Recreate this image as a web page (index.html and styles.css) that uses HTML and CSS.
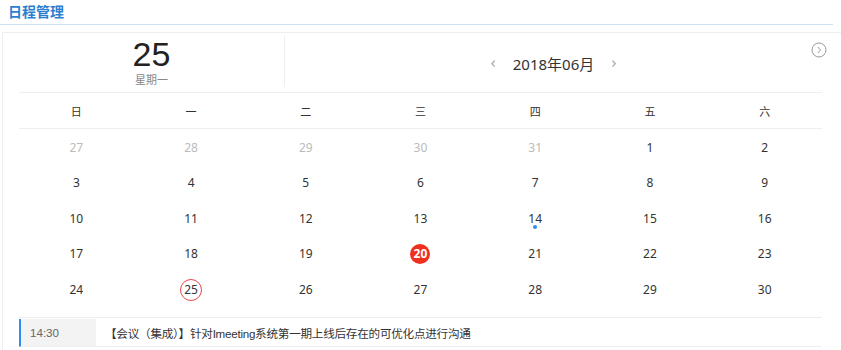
FILE: index.html
```html
<!DOCTYPE html>
<html lang="zh">

<head>
    <meta charset="UTF-8" />
    <link rel="stylesheet" href="styles.css">
</head>

<body>
    <div class="title-bar">
        <span class="title">日程管理</span>
    </div>

    <div class="panel">
        <div class="panel-head">
            <div class="today">
                <div class="today-num">25</div>
                <div class="today-week">星期一</div>
            </div>
            <div class="month-nav">
                <span class="arrow">&lsaquo;</span>
                <span class="month">2018年06月</span>
                <span class="arrow">&rsaquo;</span>
            </div>
            <svg class="more" width="16" height="16" viewBox="0 0 16 16">
                <circle cx="8" cy="8" r="7" fill="none" stroke="#999" stroke-width="1" />
                <path d="M6.8 5 L9.6 8 L6.8 11" fill="none" stroke="#999" stroke-width="1" />
            </svg>
        </div>

        <div class="calendar">
            <div class="week-row">
                <span>日</span><span>一</span><span>二</span><span>三</span><span>四</span><span>五</span><span>六</span>
            </div>
            <div class="days" id="days"></div>
        </div>

        <div class="event">
            <span class="event-time">14:30</span>
            <span class="event-title">【会议（集成）】针对Imeeting系统第一期上线后存在的可优化点进行沟通</span>
        </div>
    </div>

    <script>
        // build the month grid
        var container = document.getElementById("days");
        var cells = [27, 28, 29, 30, 31];
        for (var d = 1; d <= 30; d++) {
            cells.push(d);
        }

        for (var i = 0; i < cells.length; i++) {
            var cell = document.createElement("div");
            cell.classList.add("day");

            var num = document.createElement("span");
            num.classList.add("day-num");
            num.innerText = cells[i];

            if (i < 5) {
                cell.classList.add("other");
            }
            if (i >= 5 && cells[i] == 20) {
                num.classList.add("selected");
            }
            if (i >= 5 && cells[i] == 25) {
                num.classList.add("today-mark");
            }
            if (i >= 5 && cells[i] == 14) {
                var dot = document.createElement("i");
                dot.classList.add("dot");
                num.appendChild(dot);
            }

            cell.appendChild(num);
            container.appendChild(cell);
        }
    </script>
</body>

</html>
```

FILE: styles.css
```css
body {
    margin: 0;
    font-family: "Noto Sans", "Noto Sans CJK SC", sans-serif;
    color: #333;
    background-color: #fff;
    width: 841px;
    height: 350px;
    overflow: hidden;
}

.title-bar {
    height: 24px;
    margin-right: 8px;
    border-bottom: 1px solid #cfe1f3;
    padding-left: 8px;
}

.title {
    font-size: 14px;
    font-weight: bold;
    line-height: 23px;
    color: #2b7fd0;
}

.panel {
    margin: 7px 0 0 2px;
    border: 1px solid #eee;
    border-right: none;
    padding: 3px 19px 0 16px;
    height: 320px;
}

.panel-head {
    display: flex;
    height: 56px;
    border-bottom: 1px solid #eee;
    position: relative;
}

.today {
    width: 265px;
    border-right: 1px solid #eee;
    margin-bottom: 5px;
    display: flex;
    flex-direction: column;
    align-items: center;
    padding-top: 3px;
}

.today-num {
    font-family: "Liberation Sans", sans-serif;
    font-size: 34px;
    line-height: 30px;
    color: #222;
}

.today-week {
    margin-top: 4px;
    font-size: 11px;
    line-height: 13px;
    color: #888;
}

.month-nav {
    flex: 1;
    display: flex;
    align-items: center;
    justify-content: center;
    gap: 17px;
    padding-bottom: 2px;
}

.month {
    font-size: 15px;
    color: #333;
}

.arrow {
    font-size: 17px;
    color: #aaa;
    line-height: 1;
    padding-bottom: 3px;
}

.more {
    position: absolute;
    right: -5px;
    top: 6px;
}

.week-row {
    display: grid;
    grid-template-columns: repeat(7, 1fr);
    height: 35px;
    border-bottom: 1px solid #eee;
    align-items: center;
    font-size: 11px;
    color: #333;
}

.week-row span {
    text-align: center;
}

.days {
    display: grid;
    grid-template-columns: repeat(7, 1fr);
    grid-auto-rows: 35.5px;
    padding-top: 1px;
    height: 187px;
    border-bottom: 1px solid #eee;
}

.day {
    display: flex;
    align-items: center;
    justify-content: center;
    font-size: 12px;
    color: #333;
}

.day.other {
    color: #bbb;
}

.day-num {
    position: relative;
    width: 22px;
    height: 22px;
    line-height: 22px;
    text-align: center;
    border-radius: 50%;
    box-sizing: border-box;
}

.day-num.selected {
    width: 20px;
    height: 20px;
    line-height: 20px;
    background-color: #f0301f;
    color: #fff;
    font-weight: bold;
}

.day-num.today-mark {
    border: 1px solid #e8454a;
    line-height: 20px;
}

.dot {
    position: absolute;
    left: 9px;
    bottom: 1px;
    width: 4px;
    height: 4px;
    border-radius: 50%;
    background-color: #2c8ef0;
}

.event {
    display: flex;
    align-items: center;
    height: 27px;
    margin-top: 1px;
    border-left: 2px solid #2c8ef0;
    border-bottom: 1px solid #eee;
    font-family: "Liberation Sans", "Noto Sans CJK SC", sans-serif;
    font-size: 11.6px;
}

.event-time {
    width: 66px;
    height: 100%;
    line-height: 27px;
    padding-left: 9px;
    background-color: #f3f3f3;
    color: #666;
}

.event-title {
    padding-left: 9px;
    letter-spacing: -0.25px;
    color: #333;
}
```
